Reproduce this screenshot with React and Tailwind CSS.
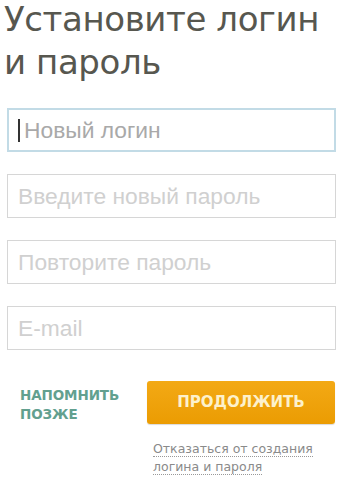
import React from 'react';

const fields = [
  { placeholder: 'Новый логин', focused: true },
  { placeholder: 'Введите новый пароль' },
  { placeholder: 'Повторите пароль' },
  { placeholder: 'E-mail' },
];

export default function App() {
  return (
    <div className="w-[343px] h-[478px] bg-white overflow-hidden" style={{ fontFamily: '"DejaVu Sans", sans-serif' }}>
      <h1 className="pl-[4px] -mt-[2px] text-[34px] leading-[43px] text-[#57574f] tracking-[-0.4px]">
        Установите логин
        <br />и пароль
      </h1>

      {/* Form fields */}
      <div className="mt-[24px] flex flex-col gap-[22px] pl-[7px] pr-[7px]">
        {fields.map((f) => (
          <div key={f.placeholder} className="relative">
            <input
              type="text"
              placeholder={f.placeholder}
              className={`w-full h-[44px] px-[10px] bg-white outline-none text-[22.8px] font-['Liberation_Sans',sans-serif] ${
                f.focused
                  ? 'border-2 border-[#c2dbe6] placeholder:text-[#a9a9a9] pl-[15px]'
                  : 'border border-[#d6d6d6] placeholder:text-[#d0d0d0]'
              }`}
            />
            {f.focused && <span className="absolute left-[11px] top-[11px] w-[2px] h-[23px] bg-[#333]" />}
          </div>
        ))}
      </div>

      {/* Actions */}
      <div className="mt-[31px] flex items-start pl-[20px] pr-[8px]">
        <button className="mt-[5px] w-[110px] text-left text-[13.5px] leading-[19px] font-bold text-[#62a08f] tracking-[-0.1px]">
          НАПОМНИТЬ ПОЗЖЕ
        </button>
        <div className="ml-auto w-[188px]">
          <button className="w-full h-[43px] rounded-[3px] bg-gradient-to-b from-[#f3a914] to-[#eb9c02] text-[#fdf1cc] text-[15px] font-bold tracking-[0px] shadow-[0_1px_1px_rgba(0,0,0,0.15)]">
            ПРОДОЛЖИТЬ
          </button>
          <div className="mt-[16px] pl-[6px] text-[12.5px] leading-[18px] text-[#8a8a8a]">
            <span className="border-b border-dotted border-[#999]">Отказаться от создания</span>
            <br />
            <span className="border-b border-dotted border-[#999]">логина и пароля</span>
          </div>
        </div>
      </div>
    </div>
  );
}
